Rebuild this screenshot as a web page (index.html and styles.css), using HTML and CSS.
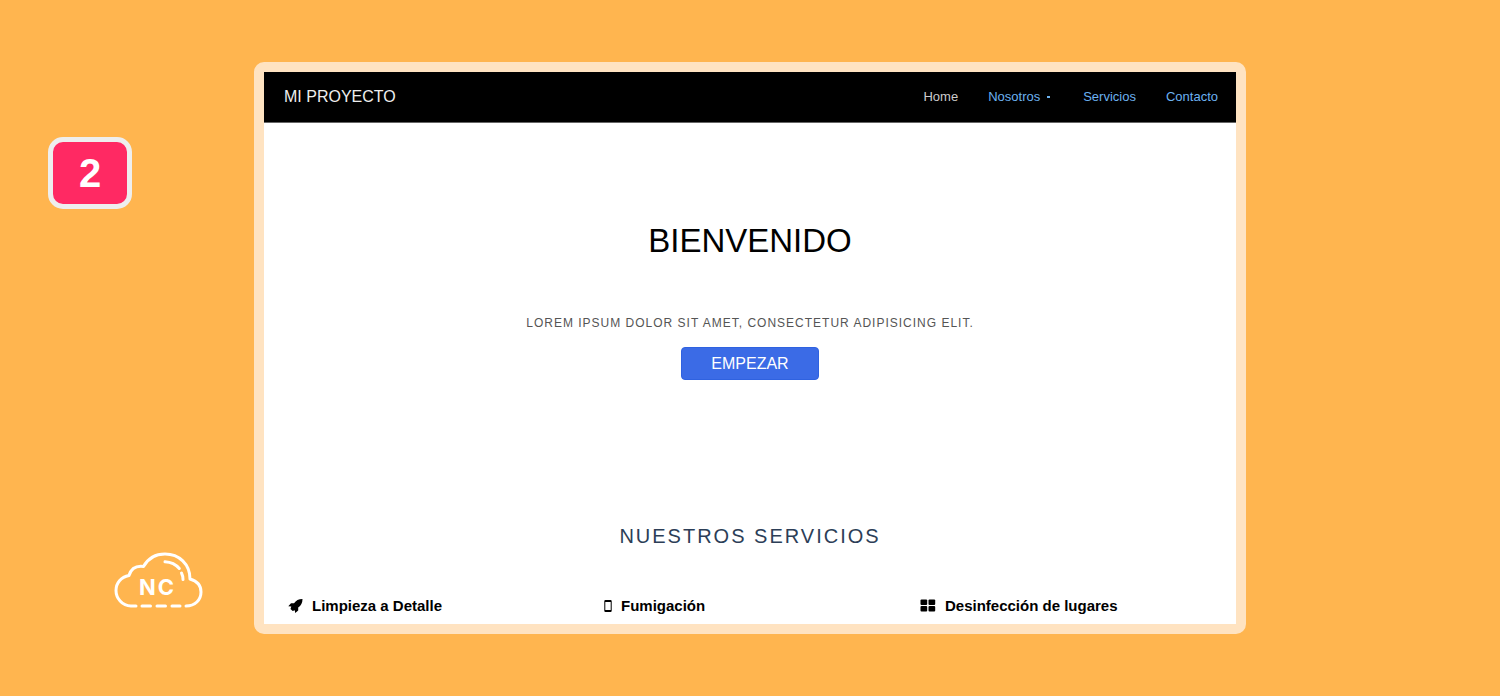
FILE: index.html
```html
<!DOCTYPE html>
<html lang="es">
<head>
<meta charset="utf-8">
<meta name="viewport" content="width=device-width, initial-scale=1">
<title>Mi Proyecto</title>
<link rel="stylesheet" href="styles.css">
</head>
<body>
<div class="stage">
  <aside class="rail">
    <div class="step">2</div>
    <svg class="cloud" viewBox="0 0 90 56" role="img" aria-label="NC">
      <g class="cloud-line">
        <path d="M22 54H17C8 54 2 46 2 38.500C2 31 7 25 15 23.500C17 17 22 13.500 29.500 14.500C34 6.500 41.500 2 51 2C65 2 76 12 76 27C83 29 87 34 87 40C87 48 81 54 72 54"/>
        <path d="M28 54H36.500M43 54H51.500M58 54H66"/>
        <path d="M51 9.700C57 10 62 12.500 65.300 16.500M67.500 21C68.500 23 69 25 69 27.500"/>
      </g>
      <text class="cloud-text" x="25" y="43">NC</text>
    </svg>
  </aside>
  <main class="frame">
    <header class="topbar">
      <a class="brand" href="#">MI PROYECTO</a>
      <nav class="menu">
        <a class="menu-link active" href="#">Home</a>
        <a class="menu-link" href="#">Nosotros<span class="dot"></span></a>
        <a class="menu-link" href="#">Servicios</a>
        <a class="menu-link" href="#">Contacto</a>
      </nav>
    </header>
    <section class="hero">
      <h1 class="hero-title">BIENVENIDO</h1>
      <p class="hero-text">LOREM IPSUM DOLOR SIT AMET, CONSECTETUR ADIPISICING ELIT.</p>
      <button class="start" type="button">EMPEZAR</button>
    </section>
    <section class="services">
      <h2 class="services-title">NUESTROS SERVICIOS</h2>
      <div class="service-list">
        <h3 class="service">
          <svg class="icon" viewBox="0 0 15 14" aria-hidden="true"><path d="M14.500 0C10.500 0 8 1.500 6 4.300H3L0.300 7.300L3.300 7.600L2.500 10L4.700 12L6.800 11.200L7.200 14L10.200 11.500V8.500C13 6.500 14.500 4 14.500 0Z"/></svg>
          Limpieza a Detalle
        </h3>
        <h3 class="service">
          <svg class="icon icon-phone" viewBox="0 0 8 14" aria-hidden="true"><path fill-rule="evenodd" d="M1.500 1h5A1.200 1.200 0 0 1 7.700 2.200v9.600A1.200 1.200 0 0 1 6.500 13h-5A1.200 1.200 0 0 1 0.300 11.800V2.200A1.200 1.200 0 0 1 1.500 1ZM1.300 3v8h5.400V3Z"/></svg>
          Fumigación
        </h3>
        <h3 class="service">
          <svg class="icon icon-grid" viewBox="0 0 16 14" aria-hidden="true"><rect x="0.500" y="0.500" width="6.700" height="5.500" rx="1"/><rect x="8.500" y="0.500" width="6.700" height="5.500" rx="1"/><rect x="0.500" y="7" width="6.700" height="5.500" rx="1"/><rect x="8.500" y="7" width="6.700" height="5.500" rx="1"/></svg>
          Desinfección de lugares
        </h3>
      </div>
    </section>
  </main>
</div>
</body>
</html>
```
FILE: styles.css
```css
* {
  box-sizing: border-box;
}

body {
  margin: 0;
  background: #ffb54f;
  font-family: "Liberation Sans", Arial, sans-serif;
}

.stage {
  display: grid;
  grid-template-columns: 254px minmax(0, 1fr) 254px;
  min-height: 100vh;
  padding: 62px 0;
}

.rail {
  display: flex;
  flex-direction: column;
  justify-content: space-between;
  padding: 75px 0 26px 48px;
}

.step {
  width: 84px;
  border: 5px solid #eeeeee;
  border-radius: 15px;
  background: #ff2963;
  color: #ffffff;
  font-size: 40px;
  font-weight: 700;
  line-height: 62px;
  text-align: center;
}

.cloud {
  width: 90px;
  height: 56px;
  margin-left: 66px;
}

.cloud-line {
  fill: none;
  stroke: #ffffff;
  stroke-width: 3;
  stroke-linecap: round;
  stroke-linejoin: round;
}

.cloud-text {
  fill: #ffffff;
  font-family: Inter, "Liberation Sans", sans-serif;
  font-size: 22px;
  font-weight: 700;
  letter-spacing: 2px;
}

.frame {
  border: 10px solid #ffe3c1;
  border-radius: 10px;
  background: #ffffff;
}

.topbar {
  display: flex;
  align-items: center;
  justify-content: space-between;
  padding: 0 18px 0 20px;
  border-bottom: 1px solid #666666;
  background: #000000;
  line-height: 50px;
}

.brand {
  color: #eeeeee;
  font-size: 16px;
  text-decoration: none;
}

.menu {
  display: flex;
  gap: 30px;
}

.menu-link {
  color: #6cb2f0;
  font-size: 13px;
  text-decoration: none;
}

.menu-link.active {
  color: #cccccc;
}

.dot {
  display: inline-block;
  width: 3px;
  height: 2px;
  margin: 0 3px 3px 7px;
  background: currentColor;
}

.hero {
  display: flex;
  flex-direction: column;
  align-items: center;
  padding: 98px 20px 0;
}

.hero-title {
  margin: 0 0 52px;
  color: #000000;
  font-size: 33px;
  font-weight: 400;
  line-height: 40px;
}

.hero-text {
  margin: 0 0 14px;
  color: #555555;
  font-size: 12px;
  letter-spacing: 1px;
  line-height: 20px;
}

.start {
  padding: 0 29px;
  border: 1px solid #2f62e0;
  border-radius: 4px;
  background: #3b6be6;
  color: #ffffff;
  font-family: inherit;
  font-size: 16px;
  line-height: 31px;
}

.services {
  padding: 144px 0 8px 24px;
}

.services-title {
  margin: 0 24px 48px 0;
  color: #2c3e57;
  font-size: 20px;
  font-weight: 400;
  letter-spacing: 2px;
  line-height: 24px;
  text-align: center;
}

.service-list {
  display: grid;
  grid-template-columns: repeat(3, minmax(0, 1fr));
}

.service {
  display: flex;
  align-items: center;
  gap: 9px;
  margin: 0;
  color: #000000;
  font-size: 15px;
  line-height: 20px;
}

.icon {
  width: 15px;
  height: 14px;
  fill: currentColor;
}

.icon-phone {
  width: 8px;
}

.icon-grid {
  width: 16px;
}
```
